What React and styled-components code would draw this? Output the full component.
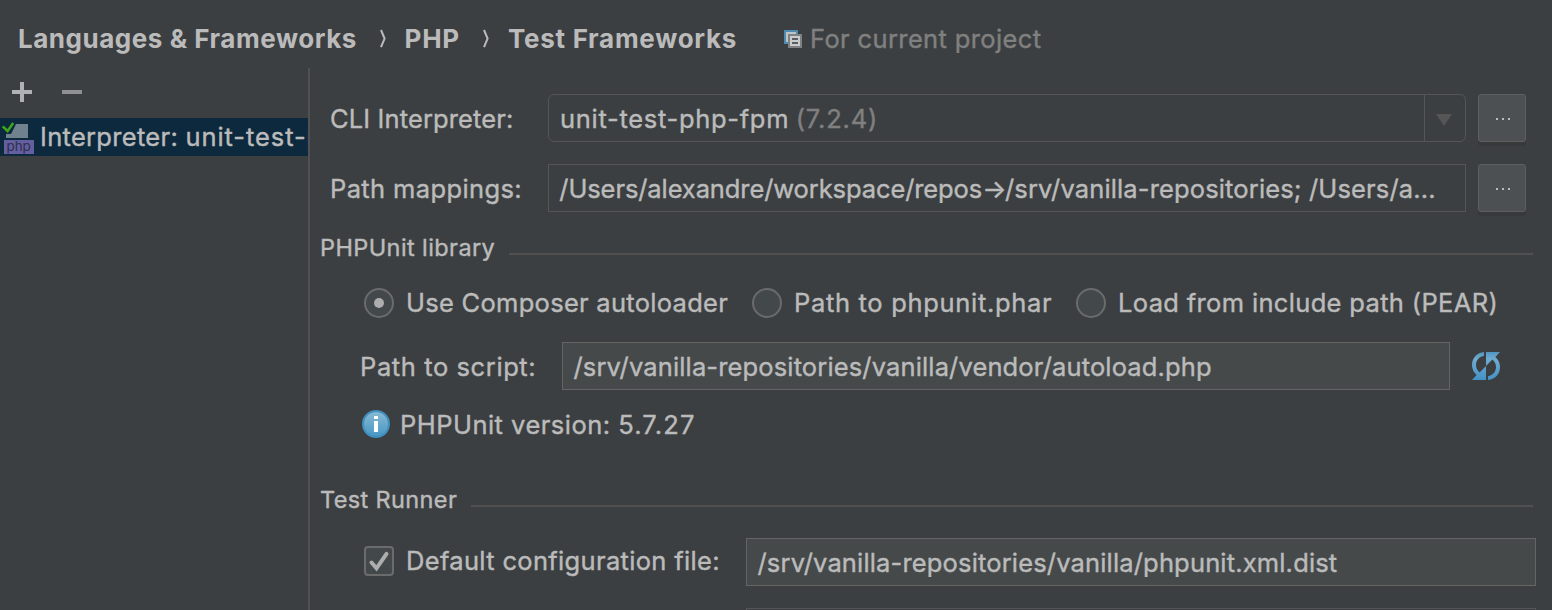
import React from 'react';
import styled, { createGlobalStyle } from 'styled-components';

const GlobalStyle = createGlobalStyle`
  * { box-sizing: border-box; }
  body {
    margin: 0;
    overflow: hidden;
    background: #3c3f41;
    color: #bbbbbb;
    font-family: Inter, "Liberation Sans", sans-serif;
    font-size: 25.5px;
  }
`;

const Window = styled.div`
  display: flex;
  flex-direction: column;
  width: 1552px;
  height: 610px;
  overflow: hidden;
`;

const Label = styled.span`
  flex: none;
  white-space: pre;
  line-height: 30px;
  letter-spacing: ${(p) => p.$ls || 0}px;
  margin-left: ${(p) => p.$ml || 0}px;
  padding-top: ${(p) => p.$pt || 0}px;
  color: ${(p) => (p.$dim ? '#808080' : 'inherit')};
  width: ${(p) => (p.$w ? `${p.$w}px` : 'auto')};
  -webkit-text-stroke: 0.4px currentColor;
`;

const Header = styled.header`
  display: flex;
  align-items: center;
  flex: none;
  height: 68px;
  padding: 10px 0 0 18px;
`;

const Crumb = styled(Label)`
  font-size: 26px;
  font-weight: 700;
  -webkit-text-stroke: 0;
`;

const Chevron = styled.svg`
  flex: none;
  width: 8px;
  height: 20px;
  margin-right: ${(p) => p.$mr}px;
`;

const Body = styled.div`
  display: flex;
  flex: 1;
  min-height: 0;
`;

const Sidebar = styled.aside`
  flex: none;
  width: 308px;
  overflow: hidden;
`;

const Toolbar = styled.div`
  display: flex;
  align-items: center;
  gap: 30px;
  height: 50px;
  padding: 0 0 2px 12px;
`;

const SelectedRow = styled.div`
  display: flex;
  align-items: center;
  height: 38px;
  background: #0d293e;
  overflow: hidden;
`;

const Divider = styled.div`
  flex: none;
  width: 2px;
  background: #515151;
`;

const Content = styled.main`
  display: flex;
  flex-direction: column;
  flex: 1;
  min-width: 0;
  padding-top: 26px;
`;

const Row = styled.div`
  display: flex;
  align-items: center;
  flex: none;
  height: ${(p) => p.$h || 48}px;
  margin-top: ${(p) => p.$mt || 0}px;
  padding-left: ${(p) => p.$pl || 0}px;
`;

const Field = styled.div`
  display: flex;
  align-items: center;
  flex: none;
  width: ${(p) => p.$w}px;
  height: 48px;
  padding-left: ${(p) => p.$pl || 11}px;
  overflow: hidden;
  border: 1px solid ${(p) => (p.$disabled ? '#555555' : '#646464')};
  border-radius: ${(p) => p.$radius || 0}px;
  background: ${(p) => (p.$disabled ? '#3c3f41' : '#45494a')};
`;

const ComboArrow = styled.div`
  display: flex;
  align-items: center;
  justify-content: center;
  width: 41px;
  height: 46px;
  margin-left: auto;
  padding: 3px 3px 0 0;
  border-left: 1px solid #555555;
`;

const MoreButton = styled.button`
  display: flex;
  align-items: center;
  justify-content: center;
  gap: 4px;
  flex: none;
  width: 48px;
  height: 48px;
  margin: 0 0 0 12px;
  padding: 2px 0 0 2px;
  border: 1px solid #5e6060;
  border-radius: 3px;
  background: #4c5052;
  box-shadow: 0 4px 0 0 #38393a;
`;

const Dot = styled.i`
  width: 2px;
  height: 2px;
  background: #bbbbbb;
`;

const SectionTitle = styled.div`
  display: flex;
  flex: none;
  height: 30px;
  margin-top: ${(p) => p.$mt}px;
  padding-left: 10px;
  font-size: 23.5px;
`;

const Rule = styled.div`
  width: ${(p) => p.$w}px;
  height: 2px;
  margin: 20px 19px 0 auto;
  background: #515151;
`;

const RadioCircle = styled.span`
  display: flex;
  align-items: center;
  justify-content: center;
  flex: none;
  width: 30px;
  height: 30px;
  border: 2px solid #6b6b6b;
  border-radius: 50%;
  background: #43494a;

  &::after {
    content: '';
    width: 10px;
    height: 10px;
    border-radius: 50%;
    background: ${(p) => (p.$checked ? '#adadad' : 'transparent')};
  }
`;

const CheckOption = styled.div`
  display: flex;
  align-items: center;
  flex: none;
  width: 382px;
  padding-bottom: 2px;
`;

const CheckSquare = styled.span`
  flex: none;
  width: 30px;
  height: 30px;
  border: 2px solid #6b6b6b;
  border-radius: 4px;
  background: #43494a;
`;

const Icon = styled.svg`
  display: block;
  flex: none;
  margin-left: ${(p) => p.$ml || 0}px;
`;

const More = () => (
  <MoreButton aria-label="Browse"><Dot /><Dot /><Dot /></MoreButton>
);

const Separator = ({ mr }) => (
  <Chevron viewBox="0 0 8 20" $mr={mr}>
    <path d="M1 1 L4.6 9.6 L1 18.2" fill="none" stroke="#bbbbbb" strokeWidth="2" />
  </Chevron>
);

const ProjectIcon = () => (
  <Icon width="18" height="18" viewBox="0 0 18 18" $ml={47}>
    <path d="M0 0h14v4h-10v10h-4z" fill="#4d8bb0" />
    <path d="M2 2h10v2h-8v8h-2z" fill="#bfc4c7" />
    <path d="M4 4h14v14h-14z" fill="#7f8283" />
    <path d="M6 6h10v10h-10z" fill="#c9cbcc" />
    <path d="M8 8h6v2h-6zM8 12h6v2h-6z" fill="#5b5e60" />
  </Icon>
);

const InterpreterIcon = () => (
  <Icon width="40" height="38" viewBox="0 0 40 38">
    <path d="M16 6h12v14h-22v-4h5z" fill="#71828f" />
    <path d="M2.7 8.3 L7.6 13 L13.2 5" fill="none" stroke="#3ea51f" strokeWidth="2.5" />
    <path d="M4 22h30v14h-30z" fill="#635fa0" />
    <text x="6.4" y="33" fontSize="13.5" textLength="24.5" fill="#30304a" fontFamily="Inter, sans-serif">php</text>
  </Icon>
);

const RefreshIcon = () => (
  <Icon width="28" height="28" viewBox="0 0 28 28" $ml={22}>
    <defs>
      <linearGradient id="refreshBlue" gradientUnits="userSpaceOnUse" x1="0" y1="0" x2="0" y2="28">
        <stop offset="0" stopColor="#5295c0" />
        <stop offset="0.25" stopColor="#70abd0" />
        <stop offset="1" stopColor="#4292c6" />
      </linearGradient>
    </defs>
    <g fill="url(#refreshBlue)">
      <path d="M12 0 C5 0.6 0 6 0 13 C0 17 1.6 20.3 4.6 23 L0 28 H14 V14 L7.6 20.4 C5.2 18.2 4 16 4 13 C4 8.5 7 4.6 12 3.8 Z" />
      <path d="M16 28 C23 27.4 28 22 28 15 C28 11 26.4 7.7 23.4 5 L28 0 H14 V14 L20.4 7.6 C22.8 9.8 24 12 24 15 C24 19.5 21 23.4 16 24.2 Z" />
    </g>
  </Icon>
);

const InfoIcon = () => (
  <Icon width="28" height="28" viewBox="0 0 28 28">
    <defs>
      <linearGradient id="infoBlue" x1="0" y1="0" x2="0" y2="1">
        <stop offset="0" stopColor="#8abad5" />
        <stop offset="1" stopColor="#4696c3" />
      </linearGradient>
    </defs>
    <circle cx="14" cy="14" r="13" fill="url(#infoBlue)" stroke="#3f8fbf" strokeWidth="2" />
    <path d="M12 6h4v3h-4zM12 11h4v11h-4z" fill="#ffffff" />
  </Icon>
);

export default function App() {
  return (
    <>
      <GlobalStyle />
      <Window>
        <Header>
          <Crumb $w={361.5} $ls={0.53}>Languages &amp; Frameworks</Crumb>
          <Separator mr={17} />
          <Crumb $w={78.5} $ls={0.8}>PHP</Crumb>
          <Separator mr={17} />
          <Crumb $w={229} $ls={0.72}>Test Frameworks</Crumb>
          <ProjectIcon />
          <Label $dim $ml={8} $ls={0.37}>For current project</Label>
        </Header>
        <Body>
          <Sidebar>
            <Toolbar>
              <Icon width="20" height="20" viewBox="0 0 20 20">
                <path d="M8 0h4v8h8v4h-8v8h-4v-8h-8v-4h8z" fill="#afb1b3" />
              </Icon>
              <Icon width="20" height="20" viewBox="0 0 20 20">
                <path d="M0 8h20v4h-20z" fill="#8e9092" />
              </Icon>
            </Toolbar>
            <SelectedRow>
              <InterpreterIcon />
              <Label $ls={0.3}>Interpreter: </Label>
              <Label $ls={0.92}>unit-test-php-fpm</Label>
            </SelectedRow>
          </Sidebar>
          <Divider />
          <Content>
            <Row $pl={20}>
              <Label $w={218} $pt={2} $ls={0.12}>CLI Interpreter:</Label>
              <Field $w={918} $disabled $radius={6}>
                <Label $pt={2} $ls={0.7}>unit-test-php-fpm</Label>
                <Label $dim $pt={2} $ml={6.5} $ls={0.85}>(7.2.4)</Label>
                <ComboArrow>
                  <Icon width="16" height="12" viewBox="0 0 16 12">
                    <path d="M0 0h16L8 12z" fill="#555555" />
                  </Icon>
                </ComboArrow>
              </Field>
              <More />
            </Row>
            <Row $pl={20} $mt={22}>
              <Label $w={218} $pt={2} $ls={0.38}>Path mappings:</Label>
              <Field $w={918} $disabled $pl={10.3}>
                <Label $pt={2} $ls={-0.1}>/Users/alexandre/workspace/repos</Label>
                <Label $pt={2} $ls={-1.5}>→</Label>
                <Label $pt={2} $ls={0.14}>/srv/vanilla-repositories; /Users/a...</Label>
              </Field>
              <More />
            </Row>
            <SectionTitle $mt={21}>
              <Label $ls={0.41}>PHPUnit library</Label>
              <Rule $w={1024} />
            </SectionTitle>
            <Row $pl={54} $mt={25} $h={30}>
              <RadioCircle $checked />
              <Label $ml={12} $w={346} $ls={0.28}>Use Composer autoloader</Label>
              <RadioCircle />
              <Label $ml={12} $w={282} $ls={0.68}>Path to phpunit.phar</Label>
              <RadioCircle />
              <Label $ml={12} $ls={0.34}>Load from include path (PEAR)</Label>
            </Row>
            <Row $pl={50} $mt={24}>
              <Label $w={202} $pt={2} $ls={0.6}>Path to script:</Label>
              <Field $w={888} $pl={10.5}>
                <Label $pt={2} $ls={0.14}>/srv/vanilla-repositories/vanilla/vendor/autoload.php</Label>
              </Field>
              <RefreshIcon />
            </Row>
            <Row $pl={52} $mt={19} $h={30}>
              <InfoIcon />
              <Label $ml={10} $pt={2} $ls={0.48}>PHPUnit version: </Label>
              <Label $pt={2} $ls={1.15}>5.7.27</Label>
            </Row>
            <SectionTitle $mt={46}>
              <Label $ls={0.37}>Test Runner</Label>
              <Rule $w={1062} />
            </SectionTitle>
            <Row $pl={54} $mt={23}>
              <CheckOption>
                <CheckSquare>
                  <Icon width="26" height="26" viewBox="0 0 26 26">
                    <path d="M5.5 14.5 L10.5 20.3 L20.5 5.8" fill="none" stroke="#adadad" strokeWidth="4" strokeLinecap="round" />
                  </Icon>
                </CheckSquare>
                <Label $ml={12} $ls={0.33}>Default configuration file:</Label>
              </CheckOption>
              <Field $w={790} $pl={10.5}>
                <Label $pt={2} $ls={0.16}>/srv/vanilla-repositories/vanilla/phpunit.xml.dist</Label>
              </Field>
            </Row>
            <Row $pl={436} $mt={22}>
              <Field $w={790} $disabled />
            </Row>
          </Content>
        </Body>
      </Window>
    </>
  );
}
